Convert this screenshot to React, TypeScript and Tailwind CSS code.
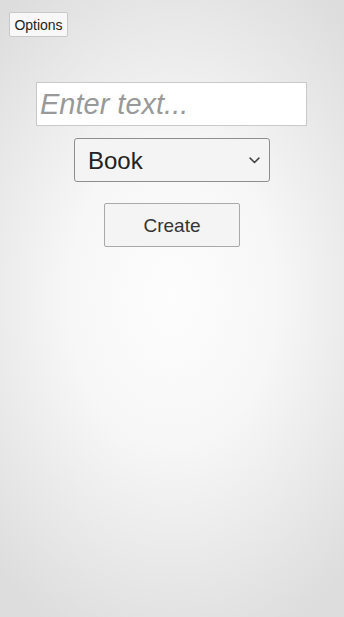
import { useState } from 'react';

export default function App() {
  const [text, setText] = useState('');
  const [kind, setKind] = useState('Book');

  return (
    <div className="min-h-screen w-full bg-[radial-gradient(ellipse_75%_60%_at_50%_48%,#fdfdfd_0%,#f7f7f7_40%,#dddddd_100%)] font-['Liberation_Sans',Arial,sans-serif]">
      {/* Botón de opciones */}
      <div className="pt-3 pl-[9px]">
        <button className="h-[25px] w-[59px] border border-[#c8c8c8] bg-[#f8f8f8] text-[14px] leading-none text-[#222] rounded-[2px]">
          Options
        </button>
      </div>

      {/* Formulario */}
      <div className="flex flex-col items-center mt-[45px]">
        <input
          value={text}
          onChange={(e) => setText(e.target.value)}
          placeholder="Enter text..."
          className="w-[271px] h-[44px] ml-[-1px] px-[3px] border border-[#c9c9c9] bg-white text-[29px] text-[#333] placeholder:italic placeholder:text-[#999] outline-none"
        />

        <div className="relative mt-3">
          <select
            value={kind}
            onChange={(e) => setKind(e.target.value)}
            className="appearance-none w-[196px] h-[44px] pl-[13px] pr-8 pt-[2px] border border-[#8e8e8e] rounded-[3px] bg-[#f4f4f4] text-[24px] text-[#222] outline-none"
          >
            <option>Book</option>
            <option>Movie</option>
            <option>Music</option>
          </select>
          <svg
            className="absolute right-[8px] top-1/2 -translate-y-1/2 h-[15px] w-[15px] text-[#444] pointer-events-none"
            fill="none"
            stroke="currentColor"
            viewBox="0 0 24 24"
          >
            <path strokeLinecap="round" strokeLinejoin="round" strokeWidth={2.5} d="M5 9l7 7 7-7" />
          </svg>
        </div>

        <button className="mt-[21px] w-[136px] h-[44px] pt-[2px] border border-[#a9a9a9] rounded-[2px] bg-[#f4f4f4] text-[19px] text-[#333]">
          Create
        </button>
      </div>
    </div>
  );
}
